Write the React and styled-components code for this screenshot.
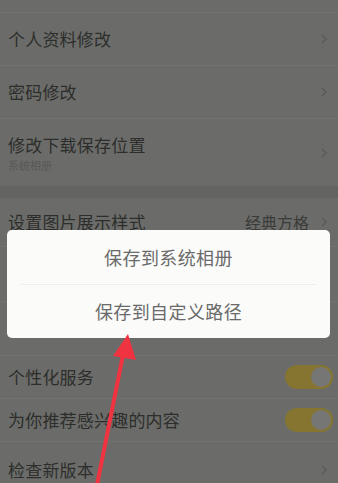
import React from "react";
import styled, { createGlobalStyle } from "styled-components";

const Global = createGlobalStyle`
  html, body { margin: 0; padding: 0; background: #6b6c69; }
  body { font-family: "Noto Sans CJK SC", "Noto Sans", sans-serif; }
`;

const Page = styled.div`
  position: relative;
  width: 338px;
  height: 483px;
  overflow: hidden;
  background: #6b6c69;
`;

const List = styled.div`
  display: flex;
  flex-direction: column;
`;

const Row = styled.div`
  display: flex;
  align-items: center;
  justify-content: space-between;
  height: ${(p) => p.h}px;
  padding: 0 11px 0 8px;
  box-sizing: border-box;
  border-bottom: ${(p) => (p.noline ? "none" : "1px solid #727370")};
  flex-shrink: 0;
`;

const TextCol = styled.div`
  display: flex;
  flex-direction: column;
  gap: 2px;
`;

const Title = styled.span`
  font-size: 17px;
  line-height: 22px;
  color: #2d2e2c;
  letter-spacing: 0.2px;
`;

const Sub = styled.span`
  font-size: 11px;
  line-height: 14px;
  color: #585956;
`;

const Right = styled.div`
  display: flex;
  align-items: center;
  gap: 12px;
`;

const Value = styled.span`
  font-size: 16px;
  color: #3a3b39;
`;

const Band = styled.div`
  height: 12px;
  background: #636461;
  flex-shrink: 0;
`;

const Chevron = () => (
  <svg width="6" height="10" viewBox="0 0 6 10">
    <path d="M1 1 L5 5 L1 9" fill="none" stroke="#585956" strokeWidth="1.2" />
  </svg>
);

const Toggle = styled.div`
  width: 48px;
  height: 24px;
  border-radius: 12px;
  background: #857530;
  margin-right: -6px;
  display: flex;
  align-items: center;
  justify-content: flex-end;
  padding: 2px;
  box-sizing: border-box;
`;

const Knob = styled.div`
  width: 20px;
  height: 20px;
  border-radius: 50%;
  background: #767774;
`;

const Dialog = styled.div`
  position: absolute;
  left: 7px;
  top: 230px;
  width: 323px;
  height: 108px;
  background: #fbfbfa;
  border-radius: 5px;
  display: flex;
  flex-direction: column;
  padding: 0 14px;
  box-sizing: border-box;
`;

const Option = styled.div`
  flex: 1;
  display: flex;
  align-items: center;
  justify-content: center;
  font-size: 18px;
  color: #6a6a6a;
  letter-spacing: 0.4px;
  border-bottom: ${(p) => (p.line ? "1px solid #eeeeec" : "none")};
`;

const ArrowLayer = styled.svg`
  position: absolute;
  left: 0;
  top: 0;
  pointer-events: none;
`;

export default function App() {
  return (
    <Page>
      <Global />
      <List>
        <Row h={13} />
        <Row h={53}>
          <Title>个人资料修改</Title>
          <Chevron />
        </Row>
        <Row h={53}>
          <Title>密码修改</Title>
          <Chevron />
        </Row>
        <Row h={67} noline>
          <TextCol>
            <Title>修改下载保存位置</Title>
            <Sub>系统相册</Sub>
          </TextCol>
          <Chevron />
        </Row>
        <Band />
        <Row h={49}>
          <Title>设置图片展示样式</Title>
          <Right>
            <Value>经典方格</Value>
            <Chevron />
          </Right>
        </Row>
        <Row h={55} />
        <Row h={54} />
        <Row h={43}>
          <Title>个性化服务</Title>
          <Toggle><Knob /></Toggle>
        </Row>
        <Row h={43}>
          <Title>为你推荐感兴趣的内容</Title>
          <Toggle><Knob /></Toggle>
        </Row>
        <Row h={56} noline>
          <Title>检查新版本</Title>
          <Chevron />
        </Row>
      </List>
      <Dialog>
        <Option line>保存到系统相册</Option>
        <Option>保存到自定义路径</Option>
      </Dialog>
      <ArrowLayer width="338" height="483" viewBox="0 0 338 483">
        <line x1="96" y1="490" x2="124" y2="350" stroke="#ef3340" strokeWidth="4" strokeLinecap="round" />
        <polygon points="128,334 113,356 136,360" fill="#ef3340" />
      </ArrowLayer>
    </Page>
  );
}
